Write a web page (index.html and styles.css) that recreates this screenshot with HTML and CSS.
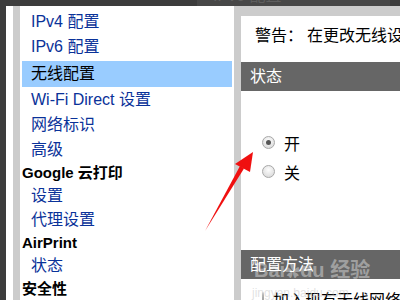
FILE: index.html
```html
<!DOCTYPE html>
<html>
	<head>
		<meta charset="utf-8" />
		<title>无线配置</title>
		<link rel="stylesheet" href="styles.css">
	</head>
	<body>
		<div class="topbar"><span class="ghost">IPv6 配置</span></div>
		<article class="screen">
			<nav class="nav">
				<div class="nav-inner">
					<a href="javascript:">IPv4 配置</a>
					<a href="javascript:">IPv6 配置</a>
					<a class="active" href="javascript:">无线配置</a>
					<a href="javascript:">Wi-Fi Direct 设置</a>
					<a href="javascript:">网络标识</a>
					<a href="javascript:">高级</a>
					<h3>Google 云打印</h3>
					<a class="sub" href="javascript:">设置</a>
					<a class="sub" href="javascript:">代理设置</a>
					<h3>AirPrint</h3>
					<a class="sub" href="javascript:">状态</a>
					<h3>安全性</h3>
				</div>
			</nav>
			<section class="main">
				<div class="main-inner">
					<p class="warn">警告：<span class="warn-text">在更改无线设置之前，请确认</span></p>
					<h2 class="bar">状态</h2>
					<ul class="radios first">
						<li><span class="radio on"></span>开</li>
						<li><span class="radio"></span>关</li>
					</ul>
					<h2 class="bar">配置方法</h2>
					<ul class="radios second">
						<li><span class="radio"></span>加入现有无线网络</li>
					</ul>
				</div>
			</section>
		</article>
		<svg class="arrow" width="400" height="300" viewBox="0 0 400 300">
			<polygon points="205,231 240,166 244,168.5" fill="#f01010"/>
			<polygon points="253,152 235,164 250,172" fill="#f01010"/>
		</svg>
		<div class="mark">
			<span class="mark-logo">Bai<b>✿</b>du 经验</span>
			<span class="mark-url">jingyan.baidu.com</span>
		</div>
	</body>
</html>
```

FILE: styles.css
```css
*{margin: 0;padding: 0;}
html,body{
	width: 400px;
	height: 300px;
	overflow: hidden;
}
body{
	background: #3c3c3c;
	font-family: "Liberation Sans", "Noto Sans CJK SC", sans-serif;
	font-size: 16px;
	position: relative;
}
li{list-style: none;}
a{text-decoration: none;}
.topbar{
	height: 6px;
	overflow: hidden;
	background: linear-gradient(to right, #3c3c3c 197px, #474747 197px, #474747 390px, #3c3c3c 390px);
}
.ghost{
	display: block;
	padding-left: 213px;
	margin-top: -12px;
	line-height: 16px;
	color: #5e5e5e;
	font-size: 16px;
}
.screen{
	display: flex;
	height: 294px;
	padding-left: 6px;
}
/* 左侧菜单 */
.nav{
	width: 221px;
	background: #fff;
	padding-left: 7px;
}
.nav-inner{
	height: 100%;
	border-left: 7px solid #ccc;
	padding: 3px 2px 0 2px;
}
.nav a{
	display: block;
	height: 25px;
	line-height: 25px;
	padding-left: 9px;
	color: #0a3299;
	white-space: nowrap;
}
.nav a.active{
	height: 26px;
	line-height: 26px;
	margin-top: 2px;
	background: #99ccff;
	color: #000;
}
.nav a.sub{
	height: 24px;
	line-height: 24px;
}
.nav h3{
	height: 22px;
	line-height: 22px;
	font-size: 15px;
	font-weight: bold;
	color: #000;
	white-space: nowrap;
}
/* 右侧内容 */
.main{
	flex: 1;
	background: #ccc;
	padding: 10px 0 0 7px;
	min-width: 0;
}
.main-inner{
	height: 100%;
	background: #fff;
	overflow: hidden;
}
.warn{
	margin: 8px 0 14px 14px;
	line-height: 24px;
	white-space: nowrap;
	color: #000;
}
.warn-text{
	margin-left: 4px;
}
.bar{
	height: 29px;
	line-height: 29px;
	padding-left: 9px;
	background: #666;
	color: #fff;
	font-size: 16px;
	font-weight: normal;
}
.radios li{
	display: flex;
	align-items: center;
	height: 29px;
	padding-left: 21px;
	white-space: nowrap;
	color: #000;
}
.radios.first{
	padding-top: 37px;
	padding-bottom: 64px;
}
.radios.second{
	padding-top: 5px;
}
.radio{
	width: 11px;
	height: 11px;
	border: 1px solid #a8a8a8;
	border-radius: 50%;
	background: radial-gradient(circle at 50% 35%, #fdfdfd, #d4d4d4);
	margin-right: 9px;
	position: relative;
}
.radio.on::after{
	content: "";
	position: absolute;
	left: 3px;
	top: 3px;
	width: 5px;
	height: 5px;
	border-radius: 50%;
	background: #555;
}
.arrow{
	position: absolute;
	left: 0;
	top: 0;
	pointer-events: none;
}
/* 水印 */
.mark{
	position: absolute;
	left: 252px;
	top: 252px;
	width: 148px;
	color: rgba(255,255,255,0.4);
	pointer-events: none;
}
.mark-logo{
	display: block;
	padding-left: 2px;
	font-size: 20px;
	font-weight: bold;
	line-height: 36px;
	white-space: nowrap;
}
.mark-logo b{
	font-size: 15px;
}
.mark-url{
	display: block;
	margin-top: -4px;
	font-size: 12px;
	color: rgba(190,190,190,0.45);
}
```
